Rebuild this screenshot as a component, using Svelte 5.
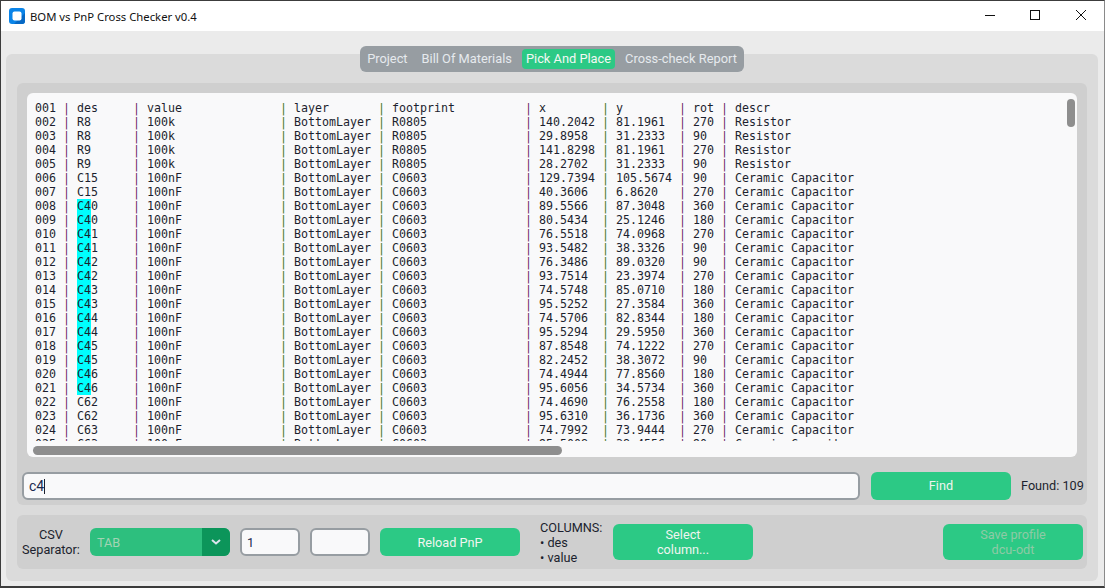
<script>
  const raw = `R8|100k|R0805|140.2042|81.1961|270|Resistor
R8|100k|R0805|29.8958|31.2333|90|Resistor
R9|100k|R0805|141.8298|81.1961|270|Resistor
R9|100k|R0805|28.2702|31.2333|90|Resistor
C15|100nF|C0603|129.7394|105.5674|90|Ceramic Capacitor
C15|100nF|C0603|40.3606|6.8620|270|Ceramic Capacitor
C40|100nF|C0603|89.5566|87.3048|360|Ceramic Capacitor
C40|100nF|C0603|80.5434|25.1246|180|Ceramic Capacitor
C41|100nF|C0603|76.5518|74.0968|270|Ceramic Capacitor
C41|100nF|C0603|93.5482|38.3326|90|Ceramic Capacitor
C42|100nF|C0603|76.3486|89.0320|90|Ceramic Capacitor
C42|100nF|C0603|93.7514|23.3974|270|Ceramic Capacitor
C43|100nF|C0603|74.5748|85.0710|180|Ceramic Capacitor
C43|100nF|C0603|95.5252|27.3584|360|Ceramic Capacitor
C44|100nF|C0603|74.5706|82.8344|180|Ceramic Capacitor
C44|100nF|C0603|95.5294|29.5950|360|Ceramic Capacitor
C45|100nF|C0603|87.8548|74.1222|270|Ceramic Capacitor
C45|100nF|C0603|82.2452|38.3072|90|Ceramic Capacitor
C46|100nF|C0603|74.4944|77.8560|180|Ceramic Capacitor
C46|100nF|C0603|95.6056|34.5734|360|Ceramic Capacitor
C62|100nF|C0603|74.4690|76.2558|180|Ceramic Capacitor
C62|100nF|C0603|95.6310|36.1736|360|Ceramic Capacitor
C63|100nF|C0603|74.7992|73.9444|270|Ceramic Capacitor
C63|100nF|C0603|95.5008|38.4556|90|Ceramic Capacitor`;

  const pad = (s, n) => String(s).padEnd(n, ' ');

  function segs(n, des, value, layer, fp, x, y, rot, descr) {
    const out = [{ t: n + ' ' }, { t: '|', c: 'p' }, { t: ' ' }];
    if (/^C4/.test(des)) {
      out.push({ t: des.slice(0, 2), c: 'hit' }, { t: pad(des.slice(2), 6) });
    } else {
      out.push({ t: pad(des, 8) });
    }
    out.push(
      { t: '|', c: 'p' }, { t: ' ' + pad(value, 19) },
      { t: '|', c: 'g' }, { t: ' ' + pad(layer, 12) },
      { t: '|', c: 'g' }, { t: ' ' + pad(fp, 19) },
      { t: '|', c: 'p' }, { t: ' ' + pad(x, 9) },
      { t: '|', c: 'g' }, { t: ' ' + pad(y, 9) },
      { t: '|', c: 'p' }, { t: ' ' + pad(rot, 4) },
      { t: '|', c: 'p' }, { t: ' ' + descr }
    );
    return out;
  }

  const rows = [
    segs('001', 'des', 'value', 'layer', 'footprint', 'x', 'y', 'rot', 'descr'),
    ...raw.split('\n').map((line, i) => {
      const [des, value, fp, x, y, rot, descr] = line.split('|');
      return segs(String(i + 2).padStart(3, '0'), des, value, 'BottomLayer', fp, x, y, rot, descr);
    })
  ];
  const tabs = ['Project', 'Bill Of Materials', 'Pick And Place', 'Cross-check Report'];
</script>

<div class="window">
  <header class="titlebar">
    <svg class="logo" width="16" height="16" viewBox="0 0 16 16">
      <rect x="0" y="0" width="16" height="16" rx="3" fill="#0a84e8" />
      <path d="M16 5v8a3 3 0 0 1-3 3H5z" fill="#0668c4" />
      <rect x="3.5" y="3.5" width="9" height="9" rx="2" fill="#fff" />
    </svg>
    <span class="title">BOM vs PnP Cross Checker v0.4</span>
    <div class="controls">
      <svg width="10" height="10" viewBox="0 0 10 10"><path d="M0 5.5h10" stroke="#111" fill="none" /></svg>
      <svg width="10" height="10" viewBox="0 0 10 10"><rect x=".5" y=".5" width="9" height="9" stroke="#111" fill="none" /></svg>
      <svg class="close" width="10" height="10" viewBox="0 0 10 10"><path d="M0 0l10 10M10 0L0 10" stroke="#111" fill="none" /></svg>
    </div>
  </header>

  <main class="content">
    <nav class="tabs">
      {#each tabs as t, i}
        <span class="tab" class:active={i === 2}>{t}</span>
      {/each}
    </nav>

    <section class="outer">
      <div class="inner">
        <div class="textbox">
          <div class="viewport">
            {#each rows as r}
              <div class="row">{#each r as s}<span class={s.c}>{s.t}</span>{/each}</div>
            {/each}
          </div>
          <div class="vbar"></div>
          <div class="hbar"></div>
        </div>

        <div class="findrow">
          <div class="entry search">c4<i class="caret"></i></div>
          <button class="btn find">Find</button>
          <span class="found">Found: 109</span>
        </div>
      </div>

      <div class="options">
        <div class="csv">CSV<br />Separator:</div>
        <div class="select">
          <span class="sel-text">TAB</span>
          <span class="sel-arrow">
            <svg width="12" height="8" viewBox="0 0 12 8"><path d="M2 2l4 3.5L10 2" stroke="#dce4ee" stroke-width="2" fill="none" /></svg>
          </span>
        </div>
        <div class="entry small">1</div>
        <div class="entry small"></div>
        <button class="btn reload">Reload PnP</button>
        <div class="columns">COLUMNS:<br />• des<br />• value</div>
        <button class="btn tall">Select<br />column...</button>
        <div class="spacer"></div>
        <button class="btn tall off">Save profile<br />dcu-odt</button>
      </div>
    </section>
  </main>
</div>

<style>
  :global(body) {
    margin: 0;
    background: #333;
  }
  .window {
    box-sizing: border-box;
    width: 1105px;
    height: 588px;
    border: 1px solid #3c3c3c;
    border-bottom-width: 2px;
    border-right-color: #8a8a8a;
    display: flex;
    flex-direction: column;
    overflow: hidden;
    font-family: Roboto, "Liberation Sans", sans-serif;
    font-size: 12.7px;
    color: #1c1f2e;
  }
  .titlebar {
    flex: none;
    height: 30px;
    background: #fff;
    display: flex;
    align-items: center;
    padding-left: 8px;
  }
  .logo { margin-right: 5px; }
  .title {
    font-family: "Noto Sans", "Open Sans", sans-serif;
    font-size: 11.3px;
    color: #111;
  }
  .controls {
    margin-left: auto;
    margin-top: -2px;
    display: flex;
    gap: 35px;
    padding-right: 18px;
  }
  .close { margin-left: 1px; }
  .content {
    flex: 1;
    background: #ebebeb;
    padding: 15px 6px 5px 5px;
    display: flex;
    flex-direction: column;
    align-items: stretch;
    min-height: 0;
  }
  .tabs {
    position: relative;
    z-index: 1;
    align-self: center;
    display: flex;
    height: 26px;
    box-sizing: border-box;
    padding: 3px;
    margin: 0 0 -18px 0;
    background: #979da2;
    border-radius: 6px;
    color: #e6eaee;
    font-size: 12.83px;
  }
  .tab {
    display: flex;
    align-items: center;
    padding: 0 4px 1px;
    margin-right: 6px;
    border-radius: 4px;
    white-space: nowrap;
  }
  .tab:last-child { margin-right: 0; }
  .tab.active {
    background: #2cc985;
    color: #f4f8f4;
  }
  .outer {
    flex: 1;
    background: #dbdbdb;
    border-radius: 6px;
    padding: 29px 11px 11px 11px;
    display: flex;
    flex-direction: column;
    gap: 10px;
    min-height: 0;
  }
  .inner {
    background: #cfcfcf;
    border-radius: 6px;
    height: 422px;
    flex: none;
    padding: 10px 10px 5px 10px;
    box-sizing: border-box;
    display: flex;
    flex-direction: column;
    gap: 15px;
  }
  .textbox {
    position: relative;
    height: 364px;
    flex: none;
    background: #f9f9fa;
    border-radius: 6px;
    overflow: hidden;
  }
  .viewport {
    height: 348px;
    overflow: hidden;
    padding: 8px 0 0 8px;
    box-sizing: border-box;
    font-family: "DejaVu Sans Mono", monospace;
    font-size: 11.63px;
    line-height: 14px;
  }
  .row {
    height: 14px;
    white-space: pre;
    color: #1c1f2e;
  }
  .p { color: #6e2a68; }
  .g { color: #4a7a2a; }
  .hit {
    background: #00ffff;
    display: inline-block;
    height: 14px;
  }
  .vbar {
    position: absolute;
    right: 2px;
    top: 6px;
    width: 8px;
    height: 28px;
    border-radius: 4px;
    background: #8e8e8e;
  }
  .hbar {
    position: absolute;
    left: 6px;
    top: 353px;
    width: 529px;
    height: 9px;
    border-radius: 4.5px;
    background: #8e8e8e;
  }
  .findrow {
    display: flex;
    align-items: center;
    margin-left: -5px;
  }
  .entry {
    box-sizing: border-box;
    height: 28px;
    border: 2px solid #979da2;
    border-radius: 6px;
    background: #f9f9fa;
    display: flex;
    align-items: center;
    color: #1c2a50;
    padding-left: 5px;
  }
  .search {
    flex: none;
    width: 838px;
    font-size: 14px;
  }
  .caret {
    width: 1px;
    height: 15px;
    background: #1c1f2e;
  }
  .btn {
    border: 0;
    margin: 0;
    padding: 0;
    width: 140px;
    flex: none;
    background: #2cc985;
    color: #f0f5f0;
    border-radius: 6px;
    font: inherit;
    line-height: 15px;
    text-align: center;
  }
  .find {
    height: 28px;
    margin-left: 11px;
    padding-bottom: 2px;
  }
  .found {
    margin-left: 10px;
    margin-bottom: 2px;
    white-space: nowrap;
  }
  .options {
    height: 54px;
    flex: none;
    background: #cfcfcf;
    border-radius: 6px;
    box-sizing: border-box;
    display: flex;
    align-items: center;
    padding-right: 4px;
    line-height: 15px;
  }
  .csv {
    width: 68px;
    margin-right: 5px;
    text-align: center;
    flex: none;
  }
  .select {
    width: 140px;
    height: 28px;
    border-radius: 6px;
    overflow: hidden;
    background: #2dbf7e;
    display: flex;
    align-items: center;
    justify-content: space-between;
    color: #a3d3b4;
    flex: none;
  }
  .sel-text { padding-left: 7px; }
  .sel-arrow {
    width: 28px;
    height: 28px;
    background: #0c955a;
    display: flex;
    align-items: center;
    justify-content: center;
  }
  .small {
    width: 60px;
    margin-left: 10px;
    flex: none;
  }
  .reload {
    height: 28px;
    margin-left: 10px;
  }
  .columns {
    margin-left: 20px;
    width: 73px;
    flex: none;
  }
  .tall { height: 36px; }
  .spacer { flex: 1; }
  .off { color: #8fc9a6; }
</style>
